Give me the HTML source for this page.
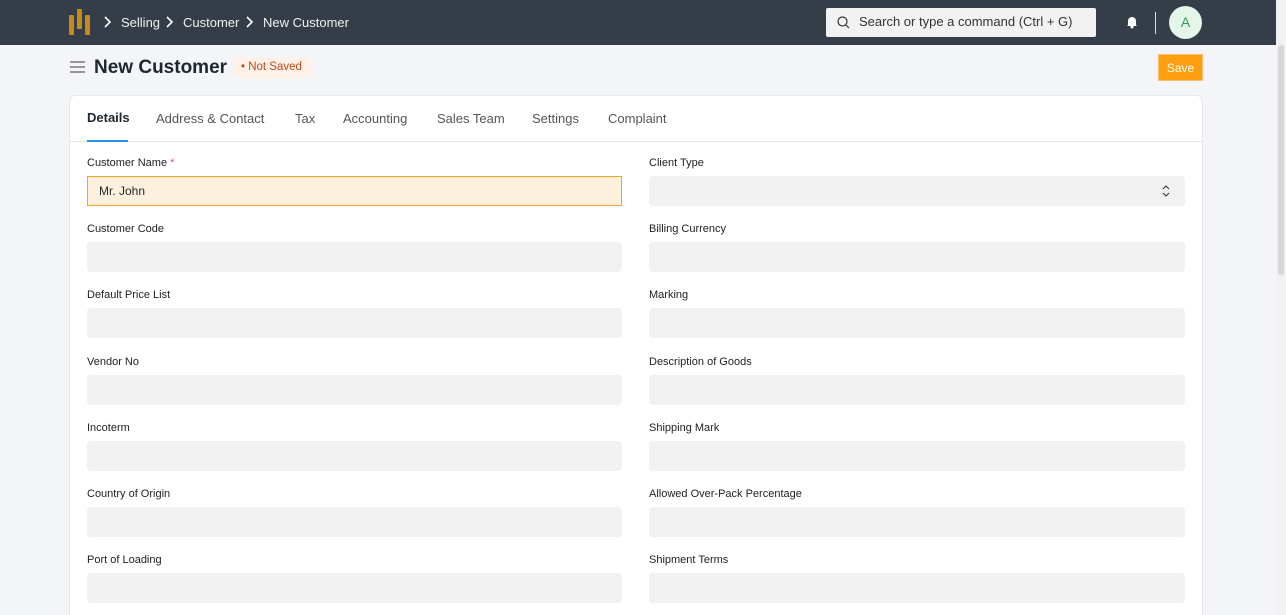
<!DOCTYPE html>
<html><head><meta charset="utf-8"><style>
*{box-sizing:border-box;margin:0;padding:0}
html,body{width:1286px;height:615px;overflow:hidden}
body{background:#f3f5f8;font-family:"Liberation Sans",sans-serif;color:#1f272e;position:relative}
.nav{position:absolute;left:0;top:0;width:1276px;height:45px;background:#353e48}
.crumb{position:absolute;top:15px;color:#f0f0f0;font-size:13px}
.sb{position:absolute;right:0;top:0;width:10px;height:615px;background:#f1f1f1}
.sb i{position:absolute;left:2px;top:45px;width:6px;height:230px;background:#d6d6d6;border-radius:3px}
.search{position:absolute;left:826px;top:8px;width:270px;height:29px;background:#f2f2f2;border-radius:2px;font-size:13px;color:#333;padding:6px 0 0 33px}
.av{position:absolute;left:1169px;top:6px;width:33px;height:33px;border-radius:50%;background:#e4f5e9;color:#2f9e5a;font-size:14px;text-align:center;line-height:33px}
.title{position:absolute;left:94px;top:57px;font-size:19px;font-weight:bold;color:#1f272e}
.badge{position:absolute;left:233px;top:57px;width:78px;height:21px;background:#fff1e8;border-radius:4px;color:#b44d17;font-size:11.5px;padding:4px 0 0 8px}
.save{position:absolute;left:1158px;top:54px;width:45px;height:27px;background:#ff9f10;color:#fff;font-size:12px;text-align:center;line-height:27px;border:1px solid #f6c272}
.card{position:absolute;left:69px;top:95px;width:1134px;height:520px;background:#fff;border:1px solid #e6e8eb;border-bottom:none;border-radius:6px 6px 0 0}
.tabs{position:absolute;left:0;top:0;width:100%;height:46px;border-bottom:1px solid #e4e6e9}
.tab{position:absolute;top:15px;font-size:13px;color:#555}
.lab{position:absolute;font-size:11px;color:#222}
.inp{position:absolute;height:30px;background:#f1f1f1;border-radius:4px}
</style></head><body>
<div class="nav">
<svg style="position:absolute;left:68px;top:8px" width="24" height="29"><rect x="1" y="7" width="5" height="20" rx="1" fill="#c88a17"/><rect x="9" y="1" width="5" height="20" rx="1" fill="#c88a17"/><rect x="17" y="7" width="5" height="20" rx="1" fill="#c88a17"/></svg>
<svg style="position:absolute;left:103px;top:15px" width="10" height="14"><path d="M2 2l5 5-5 5" stroke="#fff" stroke-width="1.6" fill="none"/></svg>
<span class="crumb" style="left:121px">Selling</span>
<svg style="position:absolute;left:165px;top:15px" width="10" height="14"><path d="M2 2l5 5-5 5" stroke="#fff" stroke-width="1.6" fill="none"/></svg>
<span class="crumb" style="left:183px">Customer</span>
<svg style="position:absolute;left:245px;top:15px" width="10" height="14"><path d="M2 2l5 5-5 5" stroke="#fff" stroke-width="1.6" fill="none"/></svg>
<span class="crumb" style="left:263px">New Customer</span>
<div class="search"><svg style="position:absolute;left:11px;top:8px" width="13" height="13"><circle cx="5.5" cy="5.5" r="4.5" stroke="#333" stroke-width="1.2" fill="none"/><path d="M9 9l3 3" stroke="#333" stroke-width="1.2"/></svg>Search or type a command (Ctrl + G)</div>
<svg style="position:absolute;left:1126px;top:15px" width="12" height="14"><path d="M2 10V6a4 4 0 018 0v4l1 1H1z" fill="#fff"/><circle cx="6" cy="12" r="1.5" fill="#fff"/></svg>
<div style="position:absolute;left:1155px;top:12px;width:1px;height:22px;background:#ddd"></div>
<div class="av">A</div>
</div>
<div class="sb"><i></i></div>
<svg style="position:absolute;left:70px;top:61px" width="16" height="12"><path d="M0 1h15M0 6h15M0 11h15" stroke="#777" stroke-width="1.5"/></svg>
<div class="title">New Customer</div>
<div class="badge">• Not Saved</div>
<div class="save">Save</div>
<div class="card">
<div class="tabs">
<span class="tab" style="left:17px;top:14px;font-weight:bold;color:#1f272e">Details</span>
<div style="position:absolute;left:17px;top:44px;width:41px;height:2px;background:#2490ef"></div>
<span class="tab" style="left:86px">Address &amp; Contact</span>
<span class="tab" style="left:225px">Tax</span>
<span class="tab" style="left:273px">Accounting</span>
<span class="tab" style="left:367px">Sales Team</span>
<span class="tab" style="left:462px">Settings</span>
<span class="tab" style="left:538px">Complaint</span>
</div>
</div>
<div id="f"></div>
<script>
var L=["Customer Name","Customer Code","Default Price List","Vendor No","Incoterm","Country of Origin","Port of Loading"];
var R=["Client Type","Billing Currency","Marking","Description of Goods","Shipping Mark","Allowed Over-Pack Percentage","Shipment Terms"];
var h="";
for(var i=0;i<7;i++){var y=156+i*66.2;
h+='<div class="lab" style="left:87px;top:'+(y+1)+'px">'+L[i]+(i==0?' <span style="color:#e24c4c">*</span>':'')+'</div>';
h+='<div class="lab" style="left:649px;top:'+(y+1)+'px">'+R[i]+'</div>';
if(i==0)h+='<div class="inp" style="left:87px;top:176px;width:535px;background:#fdf0dc;border:1px solid #f3a520;border-radius:0;font-size:12px;padding:7px 0 0 11px">Mr. John</div>';
else h+='<div class="inp" style="left:87px;top:'+(y+20)+'px;width:535px"></div>';
h+='<div class="inp" style="left:649px;top:'+(y+20)+'px;width:536px">'+(i==0?'<svg style="position:absolute;right:15px;top:8px" width="8" height="14"><path d="M1 5l3-3 3 3M1 9l3 3 3-3" stroke="#333" fill="none"/></svg>':'')+'</div>';}
document.getElementById("f").innerHTML=h;
</script>
</body></html>
